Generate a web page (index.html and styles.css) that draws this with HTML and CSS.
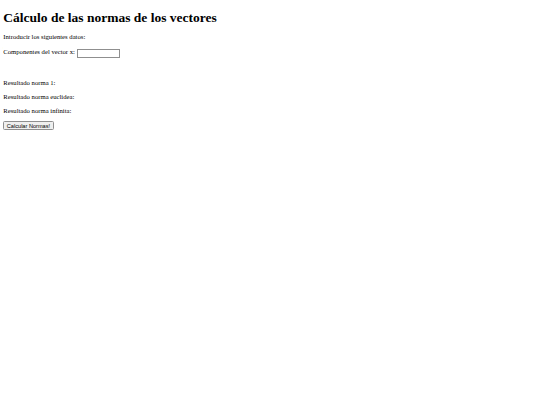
FILE: index.html
```html
<!DOCTYPE html>
<html lang="es">
<head>
<meta charset="utf-8">
<title>Normas</title>
<link rel="stylesheet" href="styles.css">
</head>
<body class="page">
<h1 class="title">Cálculo de las normas de los vectores</h1>
<p class="line">Introducir los siguientes datos:</p>
<p class="line">Componentes del vector x: <input class="field" type="text"></p>
<p class="line blank">&nbsp;</p>
<p class="line">Resultado norma 1:</p>
<p class="line">Resultado norma euclidea:</p>
<p class="line">Resultado norma infinita:</p>
<button class="btn" type="button">Calcular Normas!</button>
</body>
</html>
```
FILE: styles.css
```css
html, body {
  background: #fff;
}
.page {
  margin: 3.33px;
  font-family: "Liberation Serif", "Times New Roman", serif;
  font-size: 6.67px;
  color: #000;
}
.title {
  font-size: 13.5px;
  font-weight: bold;
  margin: 7px 0 6.6px;
}
.line {
  margin: 7.1px 0;
  line-height: normal;
}
.blank {
  line-height: 6.6px;
}
.field {
  width: 39px;
  height: 5px;
  padding: 1px 1px;
  border: 1px solid #8f8f8f;
  font-size: 5.5px;
  vertical-align: -2px;
  margin: 0;
}
.btn {
  font-family: "Liberation Sans", Arial, sans-serif;
  font-size: 5.6px;
  padding: 0.5px 2.5px;
  border: 1px solid #8f8f8f;
  border-radius: 1.5px;
  background: #efefef;
  color: #000;
  margin: 0;
  height: 9px;
  line-height: 6px;
}
```
